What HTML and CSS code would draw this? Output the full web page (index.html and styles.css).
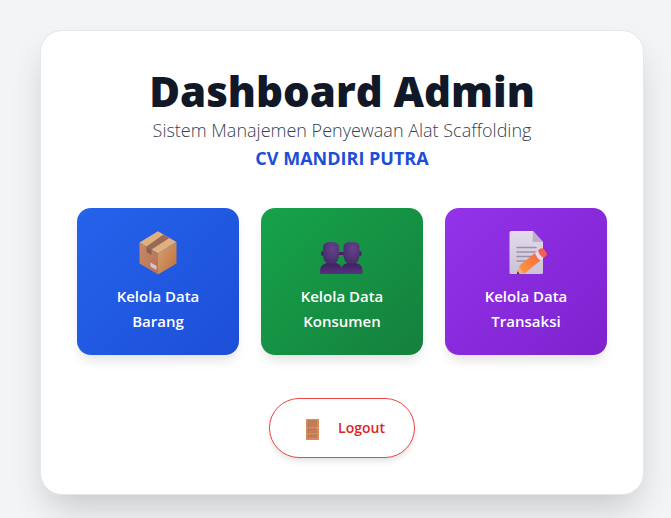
FILE: index.html
```html
<!DOCTYPE html>
<html lang="id">
<head>
<meta charset="utf-8">
<meta name="viewport" content="width=device-width, initial-scale=1">
<title>Dashboard Admin</title>
<link rel="stylesheet" href="styles.css">
</head>
<body>
<main class="panel">
  <header class="heading">
    <h1 class="title">Dashboard Admin</h1>
    <p class="subtitle">Sistem Manajemen Penyewaan Alat Scaffolding</p>
    <p class="company">CV MANDIRI PUTRA</p>
  </header>
  <nav class="menu">
    <a class="tile tile-blue" href="#barang">
      <svg class="tile-icon" viewBox="0 0 48 48" aria-hidden="true">
        <defs>
          <linearGradient id="boxLeft" x1="0" y1="0" x2="1" y2="1"><stop offset="0" stop-color="#c88b63"/><stop offset="1" stop-color="#b56f58"/></linearGradient>
          <linearGradient id="boxRight" x1="0" y1="0" x2="1" y2="1"><stop offset="0" stop-color="#d6a276"/><stop offset="1" stop-color="#bd7135"/></linearGradient>
        </defs>
        <path fill="#dfb17e" d="M24 3.2 42.5 14 24 25.5 5.5 14.500Z"/>
        <path fill="url(#boxLeft)" d="M5.500 14.500 24 25.500V46.500L5.500 35.500Z"/>
        <path fill="url(#boxRight)" d="M24 25.500 42.500 14V35.500L24 46.500Z"/>
        <path fill="#996956" d="M29.500 6.500 35.500 10 17.500 21.500 12.500 18.500Z"/>
        <path fill="#88604f" d="M12.500 18.500 17.500 21.500V27L12.500 24Z"/>
        <path fill="#d5c4d6" d="M16.500 34.500 22.500 38V42L16.500 38.500Z"/>
      </svg>
      <span>Kelola Data<br>Barang</span>
    </a>
    <a class="tile tile-green" href="#konsumen">
      <svg class="tile-icon" viewBox="0 0 48 48" aria-hidden="true">
        <defs>
          <radialGradient id="head" cx=".6" cy=".3" r=".8"><stop offset="0" stop-color="#67428e"/><stop offset="1" stop-color="#432865"/></radialGradient>
          <linearGradient id="torso" x1="0" y1="0" x2="0" y2="1"><stop offset="0" stop-color="#3d2260"/><stop offset="1" stop-color="#593180"/></linearGradient>
        </defs>
        <path fill="url(#torso)" d="M2 46V43Q2 36 9 35H18Q24 36 24 43V46Z"/>
        <path fill="url(#torso)" d="M22.500 46V43Q23 36 30 35H38Q44.500 36 44.500 43V46Z"/>
        <ellipse fill="#432365" cx="4.500" cy="25.500" rx="1.500" ry="2.500"/>
        <ellipse fill="#432365" cx="42" cy="25.500" rx="1.500" ry="2.500"/>
        <path fill="#432365" d="M20 24H27V27H20Z"/>
        <path fill="url(#head)" d="M5 19Q5 14 13 14T21 19V28Q20 36 13 36T5 28Z"/>
        <path fill="url(#head)" d="M25.500 19Q25.500 14 33.500 14T41.500 19V28Q40.500 36 33.500 36T25.500 28Z"/>
      </svg>
      <span>Kelola Data<br>Konsumen</span>
    </a>
    <a class="tile tile-purple" href="#transaksi">
      <svg class="tile-icon" viewBox="-2 0 48 48" aria-hidden="true">
        <defs>
          <linearGradient id="paper" x1="0" y1="0" x2="0" y2="1"><stop offset="0" stop-color="#e2dbe9"/><stop offset="1" stop-color="#cdc2d8"/></linearGradient>
          <linearGradient id="pencil" x1="0" y1="1" x2="1" y2="0"><stop offset="0" stop-color="#ff9a3c"/><stop offset="1" stop-color="#f4683d"/></linearGradient>
        </defs>
        <path fill="url(#paper)" d="M7.500 3H29L39 14V44.500Q39 46 37.500 46H7Q5.500 46 5.500 44.500V5Q5.500 3 7.500 3Z"/>
        <path fill="#b9b0c2" d="M29 3 39 14H30Q28.500 14 28.500 12.500Z"/>
        <path fill="none" stroke="#9d91a6" stroke-width="1.600" stroke-linecap="round" d="M13 19.500H32M13 24H32M13 28.500H28M13 33H23"/>
        <path fill="#e9b184" d="M15 38 20.500 45.500 13 46.500Z"/>
        <path fill="#352135" d="M13.500 43 15.500 46.300 13 46.500Z"/>
        <path fill="url(#pencil)" d="M31 25 36.500 32.500 20.500 45.500Q17 43 15 38Z"/>
        <path fill="#e3dbee" d="M31 25 34 22.500 39.500 30 36.500 32.500Q32.500 30 31 25Z"/>
        <path fill="#f65f50" d="M34 22.500 36.500 20.600Q38.500 19.500 40.500 22L42.300 24.500Q43.500 26.500 42 28L39.500 30Q35.500 27.500 34 22.500Z"/>
      </svg>
      <span>Kelola Data<br>Transaksi</span>
    </a>
  </nav>
  <button class="logout" type="button">
    <svg class="door" viewBox="0 0 28 28" aria-hidden="true">
      <path fill="#d88b5b" d="M7 5H20V26H7Z"/>
      <path fill="#c17d58" d="M9 7H18V13H9ZM9 15H18V19H9ZM9 21H18V24H9Z"/>
      <path fill="none" stroke="#b06f50" stroke-width=".6" d="M9 13V7H18M9 19V15H18M9 24V21H18"/>
      <circle fill="#f5a33f" cx="18.500" cy="14" r="1"/>
    </svg>
    <span>Logout</span>
  </button>
</main>
</body>
</html>
```
FILE: styles.css
```css
* {
  box-sizing: border-box;
}

body {
  margin: 0;
  padding: 30px 27px 23px 40px;
  background: #f3f4f6;
  font-family: "Open Sans", "Noto Sans", sans-serif;
}

.panel {
  display: flex;
  flex-direction: column;
  align-items: center;
  padding: 35px 36px 36px;
  background: #fff;
  border: 1px solid #e5e7eb;
  border-radius: 22px;
  box-shadow: 0 18px 36px -8px rgba(0, 0, 0, 0.2);
}

.heading {
  text-align: center;
}

.title {
  margin: 0;
  color: #111827;
  font-size: 42px;
  font-weight: 800;
  line-height: 50px;
}

.subtitle,
.company {
  margin: 0;
  font-size: 18px;
  line-height: 28px;
}

.subtitle {
  color: #374151;
  font-weight: 300;
}

.company {
  color: #1d4ed8;
  font-weight: 700;
}

.menu {
  display: grid;
  grid-template-columns: repeat(3, 1fr);
  gap: 22px;
  width: 100%;
  margin: 36px 0 43px;
}

.tile {
  display: flex;
  flex-direction: column;
  align-items: center;
  gap: 8px;
  padding: 20px 20px 21px;
  border-radius: 14px;
  box-shadow: 0 8px 12px -3px rgba(0, 0, 0, 0.12);
  color: #fff;
  font-size: 15px;
  font-weight: 600;
  line-height: 25px;
  text-align: center;
  text-decoration: none;
}

.tile-blue {
  background: linear-gradient(135deg, #2563eb, #1d4ed8);
}

.tile-green {
  background: linear-gradient(135deg, #16a34a, #15803d);
}

.tile-purple {
  background: linear-gradient(135deg, #9333ea, #7e22ce);
}

.tile-icon {
  width: 48px;
  height: 48px;
}

.logout {
  display: flex;
  align-items: center;
  gap: 11px;
  padding: 15px 29px;
  background: #fff;
  border: 1px solid #ef4444;
  border-radius: 30px;
  box-shadow: 0 4px 6px -1px rgba(0, 0, 0, 0.12);
  color: #dc2626;
  font-family: inherit;
  font-size: 14px;
  font-weight: 600;
  line-height: 28px;
  cursor: pointer;
}

.door {
  width: 28px;
  height: 28px;
}
```
